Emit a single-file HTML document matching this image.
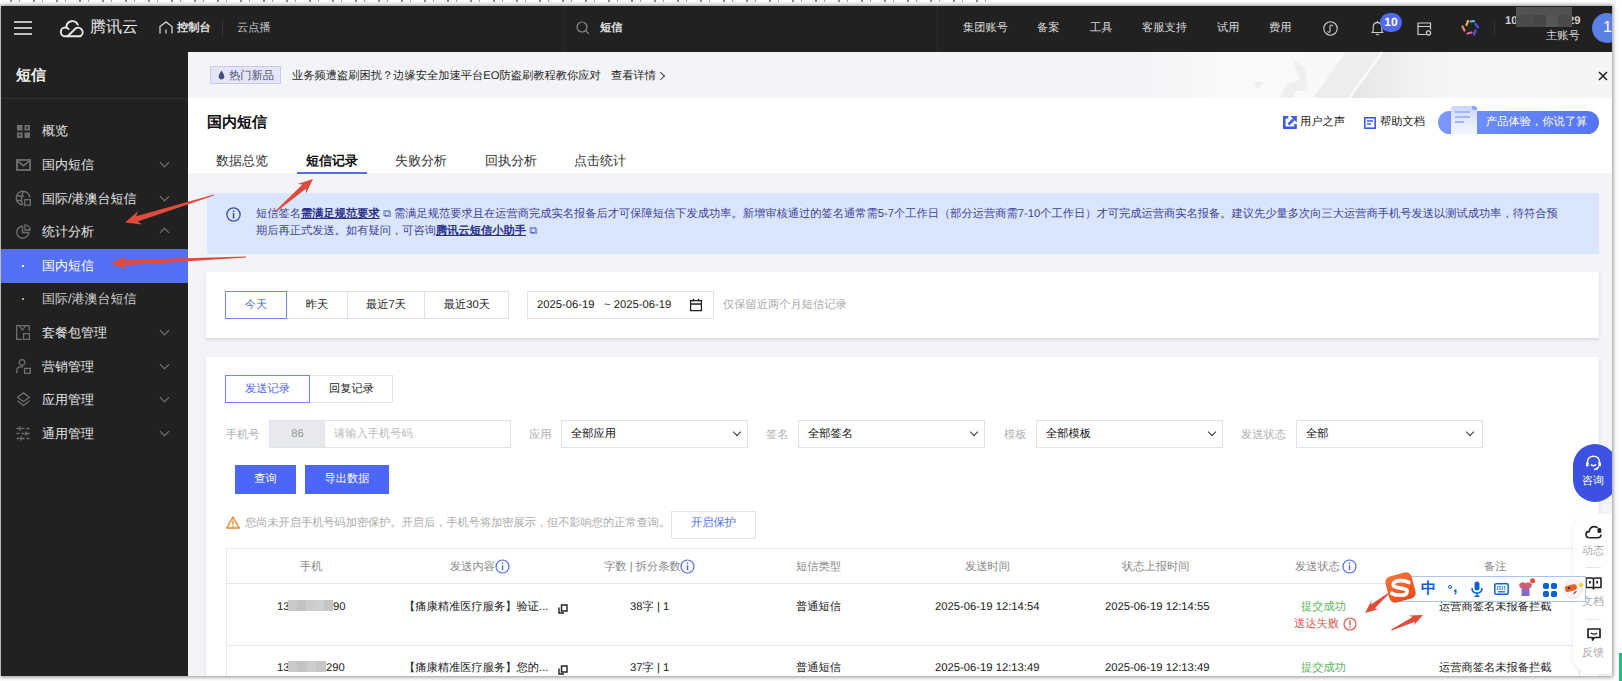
<!DOCTYPE html>
<html><head><meta charset="utf-8">
<style>
*{box-sizing:border-box;margin:0;padding:0}
html,body{width:1622px;height:681px;overflow:hidden;background:#fff;font-family:"Liberation Sans",sans-serif;text-rendering:geometricPrecision;font-size:12px;color:#000}
#frame{position:absolute;left:1px;top:6px;width:1611px;height:670px;box-shadow:0 0 4px 1px rgba(0,0,0,.45)}
#win{position:absolute;left:1px;top:6px;width:1611px;height:670px;overflow:hidden;background:#f3f4f7}
#g{position:absolute;left:-1px;top:-6px;width:1622px;height:681px}
.a{position:absolute}
.t{position:absolute;white-space:nowrap;line-height:1}
svg{position:absolute;overflow:visible}
/* header */
#hdr{position:absolute;left:0;top:6px;width:1622px;height:46px;background:#212121}
.ht{position:absolute;top:22px;font-size:11.25px;color:#d9d9d9;line-height:12px;white-space:nowrap}
/* sidebar */
#side{position:absolute;left:0;top:52px;width:188px;height:630px;background:#212121}
.si{position:absolute;left:42px;font-size:13px;color:#e3e3e3;line-height:13px;white-space:nowrap}
.arr{position:absolute;left:161px;width:7px;height:7px;border-right:1.3px solid #7a7a7a;border-bottom:1.3px solid #7a7a7a;transform:rotate(45deg)}
.arru{transform:rotate(-135deg)}
.th{top:561px;font-size:11.25px;line-height:12px;color:#888}
.td{font-size:11.25px;line-height:12px;color:#222}
</style></head><body>
<div class="a" style="left:10px;top:0;width:980px;height:1.5px;background:repeating-linear-gradient(90deg,rgba(40,40,40,.55) 0 2px,transparent 2px 9px,rgba(40,40,40,.4) 9px 10px,transparent 10px 23px)"></div>
<div id="frame"></div>
<div id="win"><div id="g">

<!-- ============ HEADER ============ -->
<div id="hdr"></div>
<!-- hamburger -->
<div class="a" style="left:14px;top:21px;width:18px;height:1.6px;background:#bfbfbf"></div>
<div class="a" style="left:14px;top:27px;width:18px;height:1.6px;background:#bfbfbf"></div>
<div class="a" style="left:14px;top:33px;width:18px;height:1.6px;background:#bfbfbf"></div>
<!-- cloud logo -->
<svg style="left:60px;top:19px" width="26" height="19" viewBox="0 0 26 19"><g fill="none" stroke="#e8e8e8" stroke-width="1.9" stroke-linecap="round"><path d="M20 17.3 H5.2 A4.4 4.4 0 0 1 5.2 8.5 C6.5 8.5 7.8 9.2 8.6 10.1"/><path d="M6.4 7.6 A6 6 0 0 1 17.8 5.6"/><path d="M7.6 17.3 L15.8 9.2 A4.5 4.5 0 0 1 20.2 17.3"/></g></svg>
<div class="t" style="left:90px;top:20px;font-size:16px;line-height:16px;color:#e8e8e8">腾讯云</div>
<!-- home -->
<svg style="left:159px;top:21px" width="14" height="13" viewBox="0 0 14 13"><path d="M1 12.5 V5.5 L7 0.9 L13 5.5 V12.5" fill="none" stroke="#cfcfcf" stroke-width="1.3"/><path d="M7 8.5 V12.5" stroke="#cfcfcf" stroke-width="1.3"/></svg>
<div class="ht" style="left:177px;font-weight:bold;color:#e0e0e0">控制台</div>
<div class="a" style="left:222px;top:21px;width:1px;height:15px;background:#3a3a3a"></div>
<div class="ht" style="left:237px;color:#c8c8c8">云点播</div>
<!-- search -->
<div class="a" style="left:564px;top:6px;width:1px;height:46px;background:#2b2b2b"></div>
<svg style="left:576px;top:21px" width="14" height="14" viewBox="0 0 14 14"><circle cx="6" cy="6" r="5" fill="none" stroke="#8a8a8a" stroke-width="1.2"/><path d="M9.6 9.6 L12.8 12.8" stroke="#8a8a8a" stroke-width="1.2"/></svg>
<div class="ht" style="left:600px;font-weight:bold;color:#e0e0e0">短信</div>
<!-- right nav -->
<div class="a" style="left:937px;top:6px;width:1px;height:46px;background:#2b2b2b"></div>
<div class="ht" style="left:963px">集团账号</div>
<div class="ht" style="left:1037px">备案</div>
<div class="ht" style="left:1090px">工具</div>
<div class="ht" style="left:1142px">客服支持</div>
<div class="ht" style="left:1217px">试用</div>
<div class="ht" style="left:1269px">费用</div>
<svg style="left:1323px;top:21px" width="15" height="15" viewBox="0 0 15 15"><circle cx="7.5" cy="7.5" r="6.7" fill="none" stroke="#cfcfcf" stroke-width="1.1"/><path d="M4.8 10.2 C4.8 11.6 7 11.6 7 10.2 V5.2 C7 3.6 9.6 3.6 9.6 5.2" fill="none" stroke="#cfcfcf" stroke-width="1.1"/></svg>
<svg style="left:1371px;top:20px" width="13" height="16" viewBox="0 0 13 16"><path d="M1 12.5 H12 L10.8 11 V7 C10.8 4.3 9 2.6 6.5 2.6 C4 2.6 2.2 4.3 2.2 7 V11 Z" fill="none" stroke="#cfcfcf" stroke-width="1.1" stroke-linejoin="round"/><path d="M6.5 1 V2.6 M5 13.8 C5.4 15 7.6 15 8 13.8" fill="none" stroke="#cfcfcf" stroke-width="1.1"/></svg>
<div class="a" style="left:1380px;top:13px;width:22px;height:19px;border-radius:10px;background:#5069f5"></div>
<div class="t" style="left:1380px;top:16px;width:22px;text-align:center;font-size:12px;font-weight:bold;color:#fff;line-height:13px">10</div>
<svg style="left:1417px;top:22px" width="15" height="14" viewBox="0 0 15 14"><path d="M8.5 12.5 H1 V1 H13.5 V7.5 M1 4.5 H13.5" fill="none" stroke="#cfcfcf" stroke-width="1.2"/><circle cx="11.5" cy="11" r="2.1" fill="none" stroke="#cfcfcf" stroke-width="1.3"/></svg>
<svg style="left:1461px;top:19px" width="19" height="18" viewBox="0 0 19 18"><path d="M5.5 6 L7 2" stroke="#e6b23a" stroke-width="2.2" stroke-linecap="round"/><path d="M9.5 2.5 L13 2.2" stroke="#6bb6f0" stroke-width="2.2" stroke-linecap="round"/><path d="M14.5 5 L17 8.3" stroke="#4a58e8" stroke-width="2.2" stroke-linecap="round"/><path d="M14.5 11.5 L13 15.5" stroke="#5b4fe0" stroke-width="2.2" stroke-linecap="round"/><path d="M10.5 13.5 L6.5 14.5" stroke="#e06aa0" stroke-width="2.2" stroke-linecap="round"/><path d="M3.5 11.5 L1.5 7.5" stroke="#e28e72" stroke-width="2.2" stroke-linecap="round"/></svg>
<div class="a" style="left:1494px;top:20px;width:1px;height:16px;background:#333"></div>
<div class="t" style="left:1505px;top:15px;font-size:11.25px;font-weight:bold;color:#d0d0d0;line-height:12px">10</div>
<div class="t" style="left:1568px;top:15px;font-size:11.25px;font-weight:bold;color:#d0d0d0;line-height:12px">29</div>
<div class="a" style="left:1516px;top:7px;width:56px;height:20px;background:#525252"></div>
<div class="a" style="left:1516px;top:15px;width:18px;height:12px;background:#4b4b4b"></div>
<div class="a" style="left:1534px;top:15px;width:12px;height:12px;background:#474747"></div>
<div class="a" style="left:1546px;top:15px;width:12px;height:12px;background:#565656"></div>
<div class="a" style="left:1558px;top:15px;width:14px;height:12px;background:#4a4a4a"></div>
<div class="t" style="left:1546px;top:30px;font-size:11.25px;color:#d9d9d9;line-height:12px">主账号</div>
<div class="a" style="left:1592px;top:13px;width:30px;height:30px;border-radius:50%;background:#5a80e4"></div>
<div class="t" style="left:1603px;top:20px;font-size:16px;color:#fff;line-height:16px">1</div>

<!-- ============ SIDEBAR ============ -->
<div id="side"></div>
<div class="t" style="left:16px;top:68px;font-size:15px;line-height:16px;font-weight:bold;color:#f0f0f0">短信</div>
<div class="a" style="left:0;top:98px;width:188px;height:1px;background:#2e2e2e"></div>
<!-- icons -->
<svg style="left:17px;top:125px" width="13" height="13" viewBox="0 0 13 13"><rect x="0" y="0" width="5.5" height="5.5" fill="#6f6f6f"/><rect x="7.5" y="0" width="5.5" height="5.5" fill="#6f6f6f"/><rect x="0" y="7.5" width="5.5" height="5.5" fill="#6f6f6f"/><rect x="7.5" y="7.5" width="5.5" height="5.5" fill="#6f6f6f"/><rect x="9.2" y="1.7" width="2" height="2" fill="#2a2a2a"/><rect x="1.7" y="9.2" width="2" height="2" fill="#2a2a2a"/></svg>
<div class="si" style="top:124px">概览</div>
<svg style="left:16px;top:159px" width="15" height="12" viewBox="0 0 15 12"><rect x="1" y="1" width="13" height="10" fill="none" stroke="#6b6b6b" stroke-width="1.9"/><path d="M1.3 1.8 L7.5 6.6 L13.7 1.8" fill="none" stroke="#6b6b6b" stroke-width="1.7"/></svg>
<div class="si" style="top:158px">国内短信</div><div class="arr" style="top:159px"></div>
<svg style="left:16px;top:191px" width="15" height="15" viewBox="0 0 15 15"><path d="M13.8 6.5 A6.8 6.8 0 1 0 6.5 13.8" fill="none" stroke="#6f6f6f" stroke-width="1.4"/><path d="M1 5 H8 M1 9.5 H6 M7.5 0.8 C5 4 5 11 7 14" fill="none" stroke="#6f6f6f" stroke-width="1.3"/><rect x="8.7" y="8.7" width="5.6" height="5.6" fill="none" stroke="#6f6f6f" stroke-width="1.3"/></svg>
<div class="si" style="top:192px">国际/港澳台短信</div><div class="arr" style="top:193px"></div>
<svg style="left:16px;top:224px" width="15" height="15" viewBox="0 0 15 15"><path d="M6.5 2.2 A6 6 0 1 0 12.8 8.5 H6.5 Z" fill="none" stroke="#6f6f6f" stroke-width="1.4" stroke-linejoin="round"/><path d="M9 0.8 A5.5 5.5 0 0 1 14.2 6 H9 Z" fill="none" stroke="#6f6f6f" stroke-width="1.3"/></svg>
<div class="si" style="top:225px">统计分析</div><div class="arr arru" style="top:229px"></div>
<!-- active -->
<div class="a" style="left:0;top:249px;width:188px;height:34px;background:#5470f7"></div>
<div class="a" style="left:22px;top:265px;width:2.2px;height:2.2px;background:#fff"></div>
<div class="si" style="top:259px;color:#fff">国内短信</div>
<div class="a" style="left:22px;top:298px;width:2.2px;height:2.2px;background:#aaa"></div>
<div class="si" style="top:292px;color:#cfcfcf">国际/港澳台短信</div>
<svg style="left:16px;top:325px" width="14" height="15" viewBox="0 0 14 15"><path d="M13.2 6 V0.7 H0.7 V14.3 H6" fill="none" stroke="#6f6f6f" stroke-width="1.3"/><path d="M3.5 0.9 L6.5 5 L9.5 0.9" fill="none" stroke="#6f6f6f" stroke-width="1.2"/><rect x="7.6" y="8.6" width="5.8" height="5.8" fill="none" stroke="#6f6f6f" stroke-width="1.2"/></svg>
<div class="si" style="top:326px">套餐包管理</div><div class="arr" style="top:327px"></div>
<svg style="left:16px;top:359px" width="15" height="15" viewBox="0 0 15 15"><circle cx="6" cy="3.5" r="2.8" fill="none" stroke="#6f6f6f" stroke-width="1.3"/><path d="M0.8 14.3 V11.5 C0.8 9.3 2.6 7.8 5 7.8 H7" fill="none" stroke="#6f6f6f" stroke-width="1.3"/><rect x="8.6" y="9.4" width="5.6" height="4.9" fill="none" stroke="#6f6f6f" stroke-width="1.3"/></svg>
<div class="si" style="top:360px">营销管理</div><div class="arr" style="top:361px"></div>
<svg style="left:16px;top:392px" width="15" height="15" viewBox="0 0 15 15"><path d="M7.5 0.9 L13.5 5.2 L7.5 9.5 L1.5 5.2 Z" fill="none" stroke="#6f6f6f" stroke-width="1.3" stroke-linejoin="round"/><path d="M1.5 8.8 L7.5 13.5 L13.5 8.8" fill="none" stroke="#6f6f6f" stroke-width="1.3" stroke-linejoin="round"/></svg>
<div class="si" style="top:393px">应用管理</div><div class="arr" style="top:394px"></div>
<svg style="left:16px;top:426px" width="15" height="15" viewBox="0 0 15 15"><path d="M0.5 2.5 H14.5 M0.5 7.5 H14.5 M0.5 12.5 H14.5" stroke="#6f6f6f" stroke-width="1.3" stroke-dasharray="3 2"/><path d="M4 0.5 V4.5 M10 5.5 V9.5 M5 10.5 V14.5" stroke="#6f6f6f" stroke-width="1.5"/></svg>
<div class="si" style="top:427px">通用管理</div><div class="arr" style="top:428px"></div>


<!-- ============ MAIN ============ -->
<!-- banner -->
<div class="a" style="left:188px;top:52px;width:1434px;height:46px;background:#f3f4f7"></div>
<svg style="left:1100px;top:52px" width="512" height="46" viewBox="1100 52 512 46"><defs>
<linearGradient id="bg1" x1="0" y1="0" x2="1" y2="0"><stop offset="0" stop-color="#f3f4f7" stop-opacity="0"/><stop offset=".25" stop-color="#fafafb"/><stop offset=".7" stop-color="#f7f7f8"/><stop offset="1" stop-color="#f3f4f6"/></linearGradient>
<linearGradient id="bg2" x1="0" y1="0" x2="1" y2="0"><stop offset="0" stop-color="#e4e4e6"/><stop offset="1" stop-color="#f3f3f5" stop-opacity="0"/></linearGradient></defs>
<rect x="1100" y="52" width="512" height="46" fill="url(#bg1)"/>
<polygon points="1313,98 1346,52 1381,52 1348,98" fill="#ededef"/>
<polygon points="1351,98 1384,52 1480,52 1447,98" fill="url(#bg2)"/>
<line x1="1349" y1="98" x2="1382" y2="52" stroke="#fbfbfb" stroke-width="2"/>
<polygon points="1280,98 1286,85 1300,80 1292,58 1305,68 1308,91 1296,91 1292,98" fill="#efeff1"/>
<polygon points="1254,82 1264,82 1258,90" fill="#eeeef0"/>
</svg>
<div class="a" style="left:210px;top:66px;width:71px;height:18px;background:#e5e6fd;border:1px solid #c6c8f9"></div>
<svg style="left:218px;top:70px" width="7" height="10" viewBox="0 0 7 10"><path d="M3.5 0.5 C2 3 0.6 4.8 0.6 6.6 C0.6 8.3 1.9 9.5 3.5 9.5 C5.1 9.5 6.4 8.3 6.4 6.6 C6.4 4.8 5 3 3.5 0.5 Z" fill="#4a4d7a"/></svg>
<div class="t" style="left:229px;top:70px;font-size:11.25px;line-height:12px;color:#4b4d6e">热门新品</div>
<div class="t" id="bn1" style="left:292px;top:70px;font-size:11.25px;line-height:12px;color:#1f1f1f">业务频遭盗刷困扰？边缘安全加速平台EO防盗刷教程教你应对</div>
<div class="t" style="left:611px;top:70px;font-size:11.25px;line-height:12px;color:#1f1f1f">查看详情</div>
<div class="a" style="left:658px;top:73px;width:5.5px;height:5.5px;border-right:1.3px solid #333;border-top:1.3px solid #333;transform:rotate(45deg)"></div>
<svg style="left:1598px;top:71px" width="10" height="10" viewBox="0 0 10 10"><path d="M1 1 L9 9 M9 1 L1 9" stroke="#222" stroke-width="1.5"/></svg>

<!-- page header -->
<div class="a" style="left:188px;top:98px;width:1434px;height:75px;background:#fff"></div>
<div class="t" style="left:207px;top:115px;font-size:15px;line-height:16px;font-weight:bold;color:#111">国内短信</div>
<div class="t" style="left:216px;top:154px;font-size:13px;line-height:13px;color:#333">数据总览</div>
<div class="t" style="left:306px;top:154px;font-size:13px;line-height:13px;color:#111;font-weight:bold">短信记录</div>
<div class="t" style="left:395px;top:154px;font-size:13px;line-height:13px;color:#333">失败分析</div>
<div class="t" style="left:485px;top:154px;font-size:13px;line-height:13px;color:#333">回执分析</div>
<div class="t" style="left:574px;top:154px;font-size:13px;line-height:13px;color:#333">点击统计</div>
<div class="a" style="left:297px;top:171.5px;width:70px;height:2px;background:#4f6af5"></div>
<!-- header right buttons -->
<svg style="left:1283px;top:116px" width="14" height="13" viewBox="0 0 14 13"><path d="M5.3 1.3 H1.3 V11.7 H12.5 V8" fill="none" stroke="#3d5af1" stroke-width="2.6"/><path d="M5.5 8.5 L10.5 3.5" stroke="#3d5af1" stroke-width="2.6"/><polygon points="7.3,0 13.8,0 13.8,6.5" fill="#3d5af1"/></svg>
<div class="t" style="left:1300px;top:117px;font-size:11.25px;line-height:11px;color:#222">用户之声</div>
<svg style="left:1364px;top:117px" width="12" height="12" viewBox="0 0 12 12"><rect x="0.8" y="0.8" width="10.4" height="10.4" fill="none" stroke="#3b5bf0" stroke-width="1.6"/><path d="M3 4 H9 M3 7 H7" stroke="#3b5bf0" stroke-width="1.4"/></svg>
<div class="t" style="left:1380px;top:117px;font-size:11.25px;line-height:11px;color:#222">帮助文档</div>
<div class="a" style="left:1438px;top:111px;width:161px;height:23px;border-radius:12px;background:linear-gradient(90deg,#7d98fb 0%,#6587f8 40%,#5574f5 100%)"></div>
<div class="a" style="left:1451px;top:106px;width:26px;height:28px;background:linear-gradient(180deg,#c9d6ff 0%,#e6ecff 60%,#f5f7ff 100%);border-radius:3px 5px 0 0"></div><div class="a" style="left:1472px;top:106px;width:5px;height:4px;background:#8aa2f8;border-radius:0 3px 0 2px"></div>
<div class="a" style="left:1455px;top:111px;width:15px;height:2px;background:#a3b6fb"></div>
<div class="a" style="left:1455px;top:116px;width:15px;height:2px;background:#a3b6fb"></div>
<div class="a" style="left:1455px;top:121px;width:9px;height:2px;background:#a3b6fb"></div>
<div class="t" style="left:1486px;top:116px;font-size:11.25px;line-height:12px;color:#fff">产品体验，你说了算</div>

<!-- alert -->
<div class="a" style="left:207px;top:193px;width:1392px;height:61px;background:#dae6fd"></div>
<svg style="left:226px;top:207px" width="15" height="15" viewBox="0 0 15 15"><circle cx="7.5" cy="7.5" r="6.6" fill="none" stroke="#3c4cae" stroke-width="1.3"/><rect x="6.8" y="3.5" width="1.5" height="1.5" fill="#3c4cae"/><rect x="6.8" y="6" width="1.5" height="5.5" fill="#3c4cae"/></svg>
<div class="t" id="al1" style="left:256px;top:208px;font-size:11.25px;line-height:12px;color:#3d439e">短信签名<b style="text-decoration:underline;color:#2a2f8a">需满足规范要求</b> <span style="color:#5060b8">⧉</span> 需满足规范要求且在运营商完成实名报备后才可保障短信下发成功率。新增审核通过的签名通常需5-7个工作日（部分运营商需7-10个工作日）才可完成运营商实名报备。建议先少量多次向三大运营商手机号发送以测试成功率，待符合预</div>
<div class="t" id="al2" style="left:256px;top:225px;font-size:11.25px;line-height:12px;color:#3d439e">期后再正式发送。如有疑问，可咨询<b style="text-decoration:underline;color:#2a2f8a">腾讯云短信小助手</b> <span style="color:#5060b8">⧉</span></div>

<!-- card 1 -->
<div class="a" style="left:206px;top:272px;width:1393px;height:66px;background:#fff;box-shadow:0 2px 3px rgba(0,0,0,.12)"></div>
<div class="a" style="left:225px;top:291px;width:284px;height:28px;border:1px solid #dfe2ea;background:#fff"></div>
<div class="a" style="left:286px;top:291px;width:1px;height:28px;background:#dfe2ea"></div>
<div class="a" style="left:347px;top:291px;width:1px;height:28px;background:#dfe2ea"></div>
<div class="a" style="left:424px;top:291px;width:1px;height:28px;background:#dfe2ea"></div>
<div class="a" style="left:225px;top:291px;width:62px;height:28px;border:1px solid #6f86f7"></div>
<div class="t" style="left:225px;top:299px;width:62px;text-align:center;font-size:11.25px;line-height:12px;color:#4f6af5">今天</div>
<div class="t" style="left:287px;top:299px;width:60px;text-align:center;font-size:11.25px;line-height:12px;color:#222">昨天</div>
<div class="t" style="left:348px;top:299px;width:76px;text-align:center;font-size:11.25px;line-height:12px;color:#222">最近7天</div>
<div class="t" style="left:425px;top:299px;width:84px;text-align:center;font-size:11.25px;line-height:12px;color:#222">最近30天</div>
<div class="a" style="left:527px;top:291px;width:187px;height:28px;border:1px solid #dfe2ea;background:#fff"></div>
<div class="t" style="left:537px;top:299px;font-size:11.25px;line-height:12px;color:#222">2025-06-19</div><div class="t" style="left:604px;top:299px;font-size:11.25px;line-height:12px;color:#222">~ 2025-06-19</div>
<svg style="left:689px;top:298px" width="14" height="14" viewBox="0 0 14 14"><rect x="1.6" y="2.6" width="10.8" height="10" fill="none" stroke="#222" stroke-width="1.3"/><path d="M1.6 6 H12.4 M4.5 0.8 V3.5 M9.5 0.8 V3.5" stroke="#222" stroke-width="1.3"/></svg>
<div class="t" style="left:723px;top:299px;font-size:11.25px;line-height:12px;color:#a8a8a8">仅保留近两个月短信记录</div>

<!-- card 2 -->
<div class="a" style="left:206px;top:357px;width:1393px;height:330px;background:#fff;box-shadow:0 2px 3px rgba(0,0,0,.12)"></div>
<div class="a" style="left:225px;top:375px;width:168px;height:28px;border:1px solid #dfe2ea"></div>
<div class="a" style="left:225px;top:375px;width:85px;height:28px;border:1px solid #6f86f7"></div>
<div class="t" style="left:225px;top:383px;width:85px;text-align:center;font-size:11.25px;line-height:12px;color:#4f6af5">发送记录</div>
<div class="t" style="left:310px;top:383px;width:83px;text-align:center;font-size:11.25px;line-height:12px;color:#222">回复记录</div>

<div class="t" style="left:226px;top:429px;font-size:11.25px;line-height:12px;color:#b0b0b0">手机号</div>
<div class="a" style="left:269px;top:420px;width:242px;height:28px;border:1px solid #dfe2ea"></div>
<div class="a" style="left:270px;top:421px;width:55px;height:26px;background:#e8e9ec;border-right:1px solid #dfe2ea"></div>
<div class="t" style="left:270px;top:428px;width:55px;text-align:center;font-size:11.25px;line-height:12px;color:#999">86</div>
<div class="t" style="left:334px;top:428px;font-size:11.25px;line-height:12px;color:#bbb">请输入手机号码</div>

<div class="t" style="left:529px;top:429px;font-size:11.25px;line-height:12px;color:#b0b0b0">应用</div>
<div class="a sel" style="left:561px;top:420px;width:187px;height:28px;border:1px solid #dfe2ea"></div>
<div class="t" style="left:571px;top:428px;font-size:11.25px;line-height:12px;color:#111">全部应用</div>
<div class="a" style="left:734px;top:429px;width:6px;height:6px;border-right:1.6px solid #333;border-bottom:1.6px solid #333;transform:rotate(45deg)"></div>

<div class="t" style="left:766px;top:429px;font-size:11.25px;line-height:12px;color:#b0b0b0">签名</div>
<div class="a" style="left:798px;top:420px;width:187px;height:28px;border:1px solid #dfe2ea"></div>
<div class="t" style="left:808px;top:428px;font-size:11.25px;line-height:12px;color:#111">全部签名</div>
<div class="a" style="left:971px;top:429px;width:6px;height:6px;border-right:1.6px solid #333;border-bottom:1.6px solid #333;transform:rotate(45deg)"></div>

<div class="t" style="left:1004px;top:429px;font-size:11.25px;line-height:12px;color:#b0b0b0">模板</div>
<div class="a" style="left:1036px;top:420px;width:187px;height:28px;border:1px solid #dfe2ea"></div>
<div class="t" style="left:1046px;top:428px;font-size:11.25px;line-height:12px;color:#111">全部模板</div>
<div class="a" style="left:1209px;top:429px;width:6px;height:6px;border-right:1.6px solid #333;border-bottom:1.6px solid #333;transform:rotate(45deg)"></div>

<div class="t" style="left:1241px;top:429px;font-size:11.25px;line-height:12px;color:#b0b0b0">发送状态</div>
<div class="a" style="left:1296px;top:420px;width:187px;height:28px;border:1px solid #dfe2ea"></div>
<div class="t" style="left:1306px;top:428px;font-size:11.25px;line-height:12px;color:#111">全部</div>
<div class="a" style="left:1467px;top:429px;width:6px;height:6px;border-right:1.6px solid #333;border-bottom:1.6px solid #333;transform:rotate(45deg)"></div>

<div class="a" style="left:235px;top:465px;width:61px;height:29px;background:#4c66fa"></div>
<div class="t" style="left:235px;top:473px;width:61px;text-align:center;font-size:11.25px;line-height:12px;color:#fff">查询</div>
<div class="a" style="left:305px;top:465px;width:84px;height:29px;background:#4c66fa"></div>
<div class="t" style="left:305px;top:473px;width:84px;text-align:center;font-size:11.25px;line-height:12px;color:#fff">导出数据</div>

<svg style="left:226px;top:516px" width="14" height="13" viewBox="0 0 14 13"><path d="M7 1 L13.2 12 H0.8 Z" fill="none" stroke="#e8862a" stroke-width="1.4" stroke-linejoin="round"/><path d="M7 4.5 V8.5 M7 9.6 V10.8" stroke="#e8862a" stroke-width="1.4"/></svg>
<div class="t" style="left:245px;top:517px;font-size:11.2px;line-height:12px;color:#acacac">您尚未开启手机号码加密保护。开启后，手机号将加密展示，但不影响您的正常查询。</div>
<div class="a" style="left:671px;top:511px;width:85px;height:28px;border:1px solid #dfe2ea"></div>
<div class="t" style="left:671px;top:517px;width:85px;text-align:center;font-size:11.25px;line-height:12px;color:#4f6af5">开启保护</div>

<!-- table -->
<div class="a" style="left:226px;top:548px;width:1354px;height:140px;border:1px solid #e3e6ee;border-bottom:none"></div>
<div class="a" style="left:226px;top:583px;width:1354px;height:1px;background:#e3e6ee"></div>
<div class="a" style="left:226px;top:645px;width:1354px;height:1px;background:#e3e6ee"></div>
<!-- table header -->
<div class="t th" style="left:300px">手机</div>
<div class="t th" style="left:450px">发送内容</div>
<svg style="left:495px;top:559px" width="15" height="15" viewBox="0 0 15 15"><circle cx="7.5" cy="7.5" r="6.5" fill="none" stroke="#4f6af5" stroke-width="1.2"/><rect x="6.8" y="3.6" width="1.4" height="1.5" fill="#4f6af5"/><rect x="6.8" y="6.2" width="1.4" height="5" fill="#4f6af5"/></svg>
<div class="t th" style="left:604px">字数 | 拆分条数</div>
<svg style="left:680px;top:559px" width="15" height="15" viewBox="0 0 15 15"><circle cx="7.5" cy="7.5" r="6.5" fill="none" stroke="#4f6af5" stroke-width="1.2"/><rect x="6.8" y="3.6" width="1.4" height="1.5" fill="#4f6af5"/><rect x="6.8" y="6.2" width="1.4" height="5" fill="#4f6af5"/></svg>
<div class="t th" style="left:796px">短信类型</div>
<div class="t th" style="left:965px">发送时间</div>
<div class="t th" style="left:1122px">状态上报时间</div>
<div class="t th" style="left:1295px">发送状态</div>
<svg style="left:1342px;top:559px" width="15" height="15" viewBox="0 0 15 15"><circle cx="7.5" cy="7.5" r="6.5" fill="none" stroke="#4f6af5" stroke-width="1.2"/><rect x="6.8" y="3.6" width="1.4" height="1.5" fill="#4f6af5"/><rect x="6.8" y="6.2" width="1.4" height="5" fill="#4f6af5"/></svg>
<div class="t th" style="left:1484px">备注</div>
<!-- row 1 -->
<div class="t td" style="left:277px;top:601px">13</div>
<div class="a" style="left:288px;top:600px;width:45px;height:11px;background:linear-gradient(90deg,#c9c9c9 0 20%,#c3c3c3 20% 40%,#cdcdcd 40% 60%,#d0d0d0 60% 80%,#c5c5c5 80%)"></div>
<div class="t td" style="left:333px;top:601px">90</div>
<div class="t td" style="left:404px;top:601px">【痛康精准医疗服务】验证...</div>
<svg style="left:558px;top:604px" width="10" height="10" viewBox="0 0 10 10"><path d="M3.5 1 H9 V7 H3.5 Z M1 3.5 V9 H6" fill="none" stroke="#222" stroke-width="1.4"/></svg>
<div class="t td" style="left:630px;top:601px">38字 | 1</div>
<div class="t td" style="left:796px;top:601px">普通短信</div>
<div class="t td" style="left:935px;top:601px">2025-06-19 12:14:54</div>
<div class="t td" style="left:1105px;top:601px">2025-06-19 12:14:55</div>
<div class="t td" style="left:1301px;top:601px;color:#5cb85c">提交成功</div>
<div class="t td" style="left:1294px;top:618px;color:#e2554d">送达失败</div>
<svg style="left:1343px;top:617px" width="14" height="14" viewBox="0 0 14 14"><circle cx="7" cy="7" r="6" fill="none" stroke="#e2554d" stroke-width="1.2"/><rect x="6.3" y="3.3" width="1.4" height="4.8" fill="#e2554d"/><rect x="6.3" y="9.2" width="1.4" height="1.5" fill="#e2554d"/></svg>
<div class="t td" style="left:1439px;top:601px">运营商签名未报备拦截</div>
<!-- row 2 -->
<div class="t td" style="left:277px;top:662px">13</div>
<div class="a" style="left:288px;top:661px;width:38px;height:11px;background:linear-gradient(90deg,#c9c9c9 0 25%,#c3c3c3 25% 50%,#cdcdcd 50% 75%,#c6c6c6 75%)"></div>
<div class="t td" style="left:326px;top:662px">290</div>
<div class="t td" style="left:404px;top:662px">【痛康精准医疗服务】您的...</div>
<svg style="left:558px;top:665px" width="10" height="10" viewBox="0 0 10 10"><path d="M3.5 1 H9 V7 H3.5 Z M1 3.5 V9 H6" fill="none" stroke="#222" stroke-width="1.4"/></svg>
<div class="t td" style="left:630px;top:662px">37字 | 1</div>
<div class="t td" style="left:796px;top:662px">普通短信</div>
<div class="t td" style="left:935px;top:662px">2025-06-19 12:13:49</div>
<div class="t td" style="left:1105px;top:662px">2025-06-19 12:13:49</div>
<div class="t td" style="left:1301px;top:662px;color:#5cb85c">提交成功</div>
<div class="t td" style="left:1439px;top:662px">运营商签名未报备拦截</div>

<!-- float panel -->
<div class="a" style="left:1573px;top:444px;width:44px;height:58px;border-radius:22px;background:#3c50e2"></div>
<svg style="left:1585px;top:455px" width="17" height="16" viewBox="0 0 17 16"><path d="M2.5 9 V7 C2.5 3.6 5.1 1.2 8.5 1.2 C11.9 1.2 14.5 3.6 14.5 7 V9" fill="none" stroke="#fff" stroke-width="1.6"/><rect x="1" y="7.5" width="2.6" height="4" rx="1" fill="#fff"/><rect x="13.4" y="7.5" width="2.6" height="4" rx="1" fill="#fff"/><path d="M6 9.5 C7 11 10 11 11 9.5 M13.5 11.5 C13 13.5 11.5 14.5 9 14.5" fill="none" stroke="#fff" stroke-width="1.5"/></svg>
<div class="t" style="left:1582px;top:476px;font-size:11px;line-height:11px;color:#fff">咨询</div>
<div class="a" style="left:1573px;top:514px;width:60px;height:160px;border-radius:19px;background:#fff;box-shadow:-1px 1px 4px rgba(0,0,0,.06)"></div>
<svg style="left:1585px;top:525px" width="17" height="14" viewBox="0 0 17 14"><path d="M4.5 12.8 C2.3 12.8 1 11.3 1 9.6 C1 7.9 2.3 6.5 4.2 6.4 C4.7 3.6 6.7 1.6 9.3 1.6 C11 1.6 12 2.2 12.8 3" fill="none" stroke="#222" stroke-width="1.6"/><path d="M4.5 12.8 H12.5 C14.5 12.8 16 11.4 16 9.5" fill="none" stroke="#222" stroke-width="1.6"/><rect x="12.5" y="3" width="3.8" height="5" rx="1.5" fill="#222"/></svg>
<div class="t" style="left:1582px;top:546px;font-size:11px;line-height:11px;color:#aaa">动态</div>
<div class="a" style="left:1586px;top:567px;width:15px;height:1px;background:#e6e6e6"></div>
<svg style="left:1585px;top:577px" width="17" height="13" viewBox="0 0 17 13"><path d="M1 1 H7 C7.9 1 8.5 1.6 8.5 2.5 V12 C8.5 11.1 7.9 10.5 7 10.5 H1 Z M16 1 H10 C9.1 1 8.5 1.6 8.5 2.5 V12 C8.5 11.1 9.1 10.5 10 10.5 H16 Z" fill="none" stroke="#222" stroke-width="1.6" stroke-linejoin="round"/><rect x="4" y="4" width="1.8" height="2.5" fill="#222"/><rect x="11.2" y="4" width="1.8" height="2.5" fill="#222"/></svg>
<div class="t" style="left:1582px;top:597px;font-size:11px;line-height:11px;color:#aaa">文档</div>
<div class="a" style="left:1586px;top:619px;width:15px;height:1px;background:#e6e6e6"></div>
<svg style="left:1587px;top:628px" width="14" height="13" viewBox="0 0 14 13"><path d="M1 1 H13 V9.5 H7.5 L5.5 12 V9.5 H1 Z" fill="none" stroke="#222" stroke-width="1.7" stroke-linejoin="round"/><path d="M4 5 C5.5 6.5 8.5 6.5 10 5" fill="none" stroke="#222" stroke-width="1.4"/></svg>
<div class="t" style="left:1582px;top:648px;font-size:11px;line-height:11px;color:#aaa">反馈</div>

<!-- IME bar -->
<div class="a" style="left:1399px;top:576px;width:187px;height:26px;background:#fff;border:1px solid #aac4ec"></div>
<div class="a" style="left:1387px;top:574px;width:27px;height:27px;border-radius:6px;background:linear-gradient(160deg,#f7753a,#e84a1a);transform:rotate(-15deg)"></div>
<svg style="left:1386px;top:575px" width="29" height="26" viewBox="0 0 27 25"><path d="M21.5 7.2 C17 4.6 8.5 4.8 6.8 8.2 C5.3 11.3 10.5 12.2 13.5 12.6 C17.5 13.1 20.8 14 19.6 17 C18.4 20 10 20.3 5.2 17.6" fill="none" stroke="#fff" stroke-width="3.6" stroke-linecap="round"/></svg>
<div class="t" style="left:1421px;top:581px;font-size:15px;line-height:15px;font-weight:bold;color:#0b62d6">中</div>
<div class="a" style="left:1448px;top:585px;width:4px;height:4px;border:1.3px solid #0b62d6;border-radius:50%"></div>
<div class="t" style="left:1453px;top:580px;font-size:16px;line-height:16px;font-weight:bold;color:#0b62d6">,</div>
<svg style="left:1471px;top:581px" width="12" height="16" viewBox="0 0 12 16"><rect x="3.5" y="0.5" width="5" height="9" rx="2.5" fill="#0b62d6"/><path d="M1 7 C1 10 3 12 6 12 C9 12 11 10 11 7 M6 12 V15 M3.5 15.2 H8.5" fill="none" stroke="#0b62d6" stroke-width="1.5"/></svg>
<svg style="left:1494px;top:583px" width="15" height="12" viewBox="0 0 15 12"><rect x="0.8" y="0.8" width="13.4" height="10.4" rx="1.5" fill="none" stroke="#0b62d6" stroke-width="1.5"/><path d="M3 3.8 H12 M3 6.2 H12" stroke="#0b62d6" stroke-width="1.3" stroke-dasharray="1.5 0.8"/><path d="M4 8.8 H11" stroke="#0b62d6" stroke-width="1.3"/></svg>
<svg style="left:1518px;top:578px" width="17" height="19" viewBox="0 0 17 19"><defs><linearGradient id="ts" x1="0" y1="0" x2="0" y2="1"><stop offset="0" stop-color="#f0584a"/><stop offset="1" stop-color="#6a6cf5"/></linearGradient></defs><path d="M1 6 L5 4 C6 5.5 9 5.5 10 4 L14 6 L13 10 L11.5 9.5 V18 H3.5 V9.5 L2 10 Z" fill="url(#ts)"/><circle cx="14.5" cy="2.8" r="2.5" fill="#f24a3a"/></svg>
<svg style="left:1543px;top:583px" width="14" height="14" viewBox="0 0 14 14"><rect x="0" y="0" width="6" height="6" rx="1.8" fill="#0b62d6"/><rect x="8" y="0" width="6" height="6" rx="1.8" fill="#0b62d6"/><rect x="0" y="8" width="6" height="6" rx="1.8" fill="#0b62d6"/><rect x="8" y="8" width="6" height="6" rx="1.8" fill="#0b62d6"/></svg>
<div class="a" style="left:1563px;top:579px;width:20px;height:20px;border-radius:50%;background:#fbf3f3;border:1px solid #f1e4e4"></div>
<div class="a" style="left:1565px;top:585px;width:12px;height:6px;border-radius:2px 3px 3px 2px;background:#e8622c;transform:rotate(-14deg)"></div><div class="a" style="left:1568px;top:587px;width:2px;height:2px;background:#333"></div><div class="a" style="left:1573px;top:592px;width:4px;height:1.3px;background:#444;transform:rotate(-40deg)"></div>
<div class="a" style="left:1579px;top:583px;width:4px;height:4px;background:#f3d24a;transform:rotate(45deg)"></div>

<!-- green bar at right edge (outside window) -->

<!-- arrows -->
<svg style="left:0;top:0" width="1622" height="681" viewBox="0 0 1622 681">
<polygon points="213.9,194.5 136.1,216.2 138.2,211.1 125.0,222.5 142.4,224.5 137.7,221.4 214.1,195.5" fill="#e04b3c"/>
<polygon points="246.0,256.5 122.8,260.1 126.2,255.7 110.5,263.4 126.8,269.6 123.1,265.6 246.0,257.5" fill="#e04b3c"/>
<polygon points="275.3,212.4 306.0,188.7 305.9,193.7 313.0,179.0 297.4,183.9 302.4,184.6 274.7,211.6" fill="#e04b3c"/>
<polygon points="1388.2,593.1 1371.0,604.4 1371.5,600.5 1365.0,613.0 1378.5,608.9 1374.6,608.6 1388.8,593.9" fill="#e04b3c"/>
<polygon points="1391.6,630.5 1415.0,621.8 1413.6,625.5 1423.0,615.0 1408.9,615.6 1412.7,616.9 1391.2,629.5" fill="#e04b3c"/>
</svg>

</div></div>
<div class="a" style="left:1619px;top:653px;width:3px;height:28px;background:#19c37d"></div>
</body></html>
